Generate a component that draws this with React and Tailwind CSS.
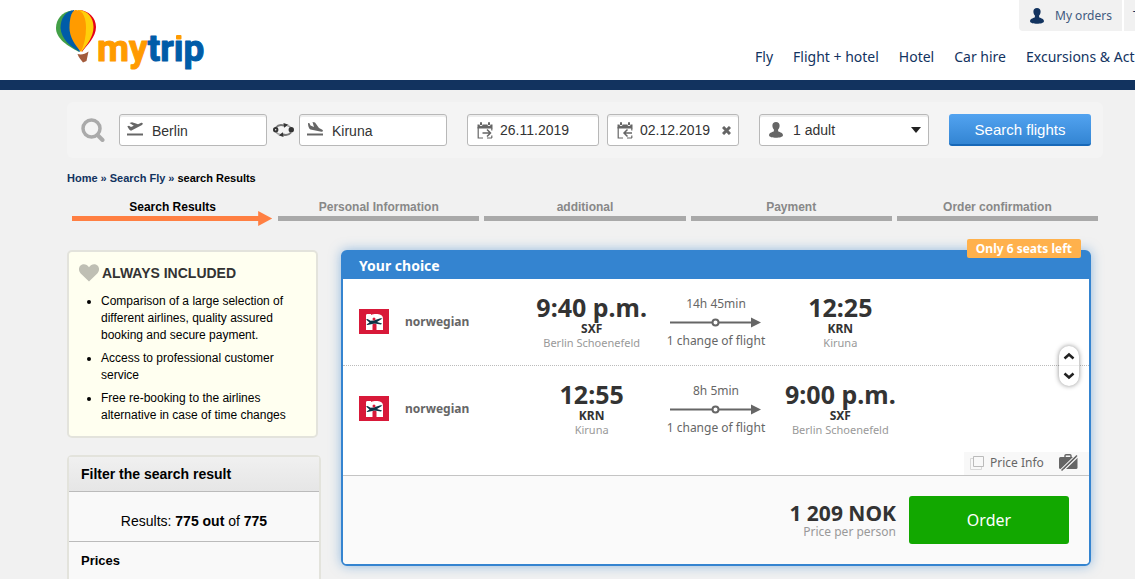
import React from "react";

const sans = "font-['Noto_Sans','Open_Sans',sans-serif]";

function Logo() {
  return (
    <svg viewBox="0 0 152 64" className="h-16 w-[152px]" role="img" aria-label="mytrip">
      <path d="M16 2.500C6 4 0 11 0 20c0 11 12 18 23 24z" fill="#43a047" />
      <path d="M18 2C9 3 4.500 11 4.500 20c1 11 9 18 19.500 24z" fill="#005ca8" />
      <path d="M22 2c11 0 18 8 18 17 0 10-9 18-14 25z" fill="#e50019" />
      <path d="M22 2c10 0 15.500 8 15.500 17 0 10-7 18-12 25z" fill="#ffcf0a" />
      <path d="M19 2c8-1 11 8 11 18 0 9-2 17-5 24-6-7-11.500-15-11.500-24 0-9 1.500-16 5.500-18z" fill="#ff9b00" />
      <path d="M21.500 46c4 1 7.500 0 11-2.500l-2 9.500-3.500 1.500c-1.500-2-4.500-5-5.500-8.500z" fill="#a35b3c" />
      <g fontFamily="Roboto, sans-serif" fontWeight="700" fontSize="37" strokeLinejoin="round" strokeWidth="1">
        <text x="41" y="53">
          <tspan fill="#ff9b00" stroke="#ff9b00">my</tspan>
          <tspan fill="#005ca8" stroke="#005ca8">trip</tspan>
        </text>
      </g>
      <path d="M117 22h11v9.500h-11z" fill="#fff" />
      <rect x="120" y="27" width="5.500" height="4.500" rx="1" fill="#ff9b00" />
    </svg>
  );
}

function Person({ className }) {
  return (
    <svg viewBox="0 0 14 16" className={className} fill="currentColor" aria-hidden="true">
      <path d="M7 0c2.300 0 3.600 1.300 3.600 3.400 0 1.700-.5 3-1.500 4v1.900c.8.800 4.300 1 4.900 3.700.2 2-3.500 2.800-7 2.800s-7.200-.8-7-2.800c.6-2.700 4.100-2.900 4.900-3.700V7.400c-1-1-1.500-2.300-1.500-4C3.400 1.300 4.700 0 7 0z" />
    </svg>
  );
}

function PlaneIcon({ landing }) {
  return (
    <svg viewBox="0 0 17 14" className="mb-0.5 h-3.5 w-[17px] shrink-0 text-[#666]" fill="currentColor" aria-hidden="true">
      <path d="M0 11.500h16v2H0z" />
      {landing ? (
        <path d="M1 1l1.500.3 1 2.200 3.500 1.400L5.500 0l2.500.5 4 5.600 3 1.300c1.500.8 1.300 2.500-.6 2.300L3.500 7.500C1.500 6.600 1 3.500 1 1z" />
      ) : (
        <path d="M.3 4.300l1.700-.5 2 1.200 2.800-1.200L2.500 1 5 .2l6 2 2.800-1.200c1.800-.6 2.800.9 1.200 2L4.500 8.600C3 9 1.300 6.500.3 4.300z" />
      )}
    </svg>
  );
}

function CalendarIcon({ back }) {
  return (
    <svg viewBox="0 0 16 17" className="h-[17px] w-4 shrink-0 text-[#666]" fill="none" stroke="currentColor" aria-hidden="true">
      <path d="M1.200 5v11H6M15 16h-5" strokeWidth="1.200" />
      <path d="M14.800 6v2.500M14.800 13.500v2.500" strokeWidth="1.200" />
      <path d="M.5 2.500H2.500a1.500 1.500 0 0 0 3 0h5a1.500 1.500 0 0 0 3 0h2V6.500H.5z" fill="currentColor" stroke="none" />
      <path d="M4 .3v2.600M12 .3v2.600" strokeWidth="2" />
      <path d={back ? "M15 11H7M10.500 7.500 7 11l3.500 3.500" : "M5.500 11h8M10 7.500l3.500 3.500-3.500 3.500"} strokeWidth="1.500" />
    </svg>
  );
}

function SwapIcon() {
  return (
    <svg viewBox="0 0 21 14" className="h-3.5 w-[21px]" fill="none" aria-hidden="true">
      <path d="M3 4.500C5 2 8 1.500 11 2.500M18 9.500c-2 2.500-5 3-8 2" stroke="#777" strokeWidth="2" />
      <path d="M10.500 0l5 1.800-4.500 3zM10.500 14l-5-1.800 4.500-3z" fill="#333" />
      <path d="M14 2.500c2 .4 3 1 4 2.500M7 11.500c-2-.4-3-1-4-2.500" stroke="#999" strokeWidth="1.500" />
      <circle cx="2.700" cy="6.800" r="1.700" stroke="#333" strokeWidth="2" />
      <circle cx="18.300" cy="6.800" r="2.700" fill="#333" />
    </svg>
  );
}

const field =
  "flex h-8 shrink-0 items-center rounded-[3px] border border-[#b8b8b8] bg-white text-sm text-[#333] shadow-[inset_0_2px_0_#eee]";

function SearchBar() {
  return (
    <form className="flex items-center rounded-md bg-[#f4f4f4] px-3 py-3" onSubmit={(e) => e.preventDefault()}>
      <svg viewBox="0 0 24 24" className="ml-0.5 mr-3.5 size-6 shrink-0" fill="none" stroke="#aaa" aria-hidden="true">
        <circle cx="10.500" cy="10.500" r="8.500" strokeWidth="3.500" />
        <path d="M16.500 17l5 5" strokeWidth="4" strokeLinecap="round" />
      </svg>
      <label className={`${field} w-[148px] pl-[7px]`}>
        <PlaneIcon />
        <input aria-label="From" defaultValue="Berlin" className="ml-2 w-full min-w-0 bg-transparent pt-0.5 outline-none" />
      </label>
      <button type="button" aria-label="Swap" className="mr-[5px] ml-1.5 shrink-0">
        <SwapIcon />
      </button>
      <label className={`${field} w-[148px] pl-[7px]`}>
        <PlaneIcon landing />
        <input aria-label="To" defaultValue="Kiruna" className="ml-2 w-full min-w-0 bg-transparent pt-0.5 outline-none" />
      </label>
      <label className={`${field} ml-5 w-[132px] pl-[9px]`}>
        <CalendarIcon />
        <input aria-label="Departure date" defaultValue="26.11.2019" className="ml-[7px] w-full min-w-0 bg-transparent outline-none" />
      </label>
      <div className={`${field} ml-2 w-[132px] pl-[9px] pr-[7px]`}>
        <CalendarIcon back />
        <input aria-label="Return date" defaultValue="02.12.2019" className="ml-[7px] w-full min-w-0 bg-transparent outline-none" />
        <button type="button" aria-label="Clear return date" className="shrink-0">
          <svg viewBox="0 0 9 9" className="size-[9px]" stroke="#666" strokeWidth="3" aria-hidden="true">
            <path d="M1 1l7 7M8 1L1 8" />
          </svg>
        </button>
      </div>
      <label className={`${field} relative ml-5 w-[170px] pl-[9px]`}>
        <Person className="h-4 w-3.5 shrink-0 text-[#666]" />
        <select aria-label="Passengers" className="ml-2.5 h-full w-full appearance-none bg-transparent outline-none">
          <option>1 adult</option>
          <option>2 adults</option>
        </select>
        <svg viewBox="0 0 10 6" className="pointer-events-none absolute right-[7px] h-1.5 w-2.5" fill="#222" aria-hidden="true">
          <path d="M0 0h10L5 6z" />
        </svg>
      </label>
      <button
        type="submit"
        className="ml-5 h-8 w-[142px] shrink-0 rounded-[3px] border-b-2 border-[#1768b8] bg-linear-to-b from-[#52a3f0] to-[#3385d3] pt-0.5 text-[15px] text-white"
      >
        Search flights
      </button>
    </form>
  );
}

function Step({ children, active }) {
  return (
    <li className={`text-center text-xs leading-4 font-bold ${active ? "text-black" : "text-[#888]"}`}>
      {children}
      {active ? (
        <svg viewBox="0 0 201 15" preserveAspectRatio="xMaxYMid slice" className="-mt-1 -mb-[5px] h-[15px] w-full" fill="#ff7f42" aria-hidden="true">
          <path d="M0 5h186V0l14 7.500L186 15v-5H0z" />
        </svg>
      ) : (
        <div className="mt-px h-[5px] bg-[#a9a9a9]" />
      )}
    </li>
  );
}

function AirlineLogo() {
  return (
    <svg viewBox="0 0 30 25" className="h-[25px] w-[30px] shrink-0" aria-hidden="true">
      <rect width="30" height="25" fill="#d81939" />
      <path d="M7 6.500c0-1 .5-1.500 1.500-1.500H12v1c3-1.500 12-2 12 3.500V21h-6.500v-5.500c0-1.500-4-1.500-4 0V21H7z" fill="#fff" />
      <path d="M7 10.500l1.500-.5 3 1.800 3-.3 7-2.300 2 .3-5.500 3.500 5 1.500-1 .9-6.500-.9-7 1.500-1-.6 3-1.800z" fill="#0b3446" />
      <circle cx="15" cy="10" r="1.500" fill="#d81939" />
    </svg>
  );
}

function Airport({ time, code, city }) {
  return (
    <div className="col-span-2 flex flex-col items-center whitespace-nowrap">
      <span className="text-[25px] leading-7 font-bold text-[#333]">{time}</span>
      <span className="mt-px text-xs leading-3.5 font-bold text-[#333]">{code}</span>
      <span className="text-[11px] leading-3.5 text-[#999]">{city}</span>
    </div>
  );
}

function Leg({ from, to, duration, className }) {
  return (
    <div className={`grid grid-cols-12 items-start pt-3.5 ${className}`}>
      <div className="col-span-3 flex items-center gap-4 pt-4 pl-4 text-xs font-bold text-[#666]">
        <AirlineLogo />
        norwegian
      </div>
      <Airport {...from} />
      <div className="col-span-2 flex flex-col items-center pt-[3px] text-xs leading-4 whitespace-nowrap text-[#666]">
        <span>{duration}</span>
        <svg viewBox="0 0 91 11" className="my-[5px] h-[11px] w-[91px]" fill="none" stroke="#666" strokeWidth="2" aria-hidden="true">
          <path d="M0 5.500h42M49 5.500h34" />
          <circle cx="45.500" cy="5.500" r="3" />
          <path d="M81 .5v10l10-5z" fill="#666" stroke="none" />
        </svg>
        <span>1 change of flight</span>
      </div>
      <Airport {...to} />
    </div>
  );
}

function Chevron({ down }) {
  return (
    <svg viewBox="0 0 12 8" className="h-2 w-3" fill="none" stroke="#222" strokeWidth="2.500" aria-hidden="true">
      <path d={down ? "M1.500 1.500L6 5.500l4.500-4" : "M1.500 6.500L6 2.500l4.500 4"} />
    </svg>
  );
}

function Offer() {
  return (
    <section className={`relative self-start rounded-md border-2 border-[#3484d0] bg-white shadow-[0_0_12px_rgba(52,132,208,0.5)] ${sans}`}>
      <span className="absolute -top-[13px] right-2 rounded-xs bg-[#ffb14c] px-[9px] text-xs leading-[19px] font-bold text-white">
        Only 6 seats left
      </span>
      <h2 className="h-[27px] bg-[#3484d0] px-4 text-sm leading-[27px] font-bold text-white">Your choice</h2>
      <div className="relative">
        <Leg
          className="h-[87px] border-b border-dotted border-[#bbb]"
          from={{ time: "9:40 p.m.", code: "SXF", city: "Berlin Schoenefeld" }}
          to={{ time: "12:25", code: "KRN", city: "Kiruna" }}
          duration="14h 45min"
        />
        <Leg
          className="h-[86px]"
          from={{ time: "12:55", code: "KRN", city: "Kiruna" }}
          to={{ time: "9:00 p.m.", code: "SXF", city: "Berlin Schoenefeld" }}
          duration="8h 5min"
        />
        <div className="absolute top-[67px] right-2.5 flex w-5 flex-col overflow-hidden rounded-full bg-white shadow-[0_0_5px_rgba(0,0,0,0.45)]">
          <button type="button" aria-label="Previous" className="flex h-5 items-center justify-center border-b border-[#eee]">
            <Chevron />
          </button>
          <button type="button" aria-label="Next" className="flex h-5 items-center justify-center">
            <Chevron down />
          </button>
        </div>
      </div>
      <div className="flex justify-end border-b border-[#c4c4c4]">
        <div className="flex h-[23px] w-[125px] items-center bg-[#f8f8f8] pb-0.5 pl-1.5 text-xs text-[#666]">
          <svg viewBox="0 0 14 14" className="mr-1.5 size-3.5" fill="none" stroke="#bbb" aria-hidden="true">
            <path d="M3.500.5h10v10h-10z" />
            <path d="M3 2.500H.500v11h11V11" stroke="#d8d8d8" />
          </svg>
          <a href="#price-info">Price Info</a>
          <svg viewBox="0 0 19 17" className="mr-[11px] ml-auto h-[17px] w-[19px]" aria-hidden="true">
            <path d="M6 3V1.700C6 1 6.500.7 7 .7h4c.7 0 1 .3 1 1V3" fill="none" stroke="#666" strokeWidth="1.400" />
            <rect y="3" width="18.500" height="12" rx="1.500" fill="#666" />
            <path d="M1 16.500L17.500.5M4 17L19 2.500" stroke="#f8f8f8" strokeWidth="1.300" />
            <path d="M2.500 16.500L18 1.500" stroke="#666" strokeWidth="1.500" />
          </svg>
        </div>
      </div>
      <div className="flex h-[88px] items-center justify-end gap-[13px] rounded-b bg-[#fafafa] pr-5">
        <div className="text-right">
          <div className="text-[21px] leading-6 font-bold text-[#333]">1 209 NOK</div>
          <div className="text-xs leading-3.5 text-[#999]">Price per person</div>
        </div>
        <button type="button" className="h-12 w-40 rounded-[3px] bg-[#12a800] text-base text-white">
          Order
        </button>
      </div>
    </section>
  );
}

function Sidebar() {
  return (
    <aside className="flex w-[254px] shrink-0 flex-col">
      <section className="mr-[3px] rounded-[5px] border-2 border-[#e3e3dc] bg-[#fffff0] px-2.5 pt-[11px] pb-3">
        <h2 className="flex items-center gap-[3px] text-sm leading-5 font-bold text-[#333]">
          <svg viewBox="0 0 20 18" className="h-[18px] w-5" fill="#bfbfb4" aria-hidden="true">
            <path d="M10 17.500L1.700 9.500C-.7 7 -.5 3.500 1.500 1.600 4-.7 8 0 10 3.200 12 0 16-.7 18.500 1.600c2 1.900 2.200 5.400-.2 7.900z" />
          </svg>
          ALWAYS INCLUDED
        </h2>
        <ul className="mt-2.5 flex list-disc flex-col gap-1.5 pr-4 pl-[22px] text-xs leading-[17px] text-black">
          <li>Comparison of a large selection of different airlines, quality assured booking and secure payment.</li>
          <li>Access to professional customer service</li>
          <li>Free re-booking to the airlines alternative in case of time changes</li>
        </ul>
      </section>
      <section className="mt-[17px] flex-1 rounded-t-[5px] border-2 border-b-0 border-[#e3e3dc] bg-[#f9f9f9] text-black">
        <h2 className="border-b border-[#bbb] bg-linear-to-b from-[#f0f0f0] to-[#e6e6e6] px-3 text-sm leading-[34px] font-bold">
          Filter the search result
        </h2>
        <p className="border-b border-[#bbb] pt-[19px] pb-2.5 text-center text-sm leading-5">
          Results: <b>775 out</b> of <b>775</b>
        </p>
        <h3 className="px-3 pt-[9px] text-[13px] leading-5 font-bold">Prices</h3>
      </section>
    </aside>
  );
}

export default function App() {
  return (
    <div className="flex min-h-screen flex-col overflow-x-hidden bg-[#f1f1f1] font-['Liberation_Sans',Arial,sans-serif]">
      <header className={`flex h-[90px] justify-between overflow-hidden border-b-10 border-[#12335f] bg-white pl-14 ${sans}`}>
        <a href="#home" className="mt-2">
          <Logo />
        </a>
        <div className="w-[380px] shrink-0 whitespace-nowrap text-[#12335f]">
          <div className="ml-auto flex w-[116px] gap-0.5 text-xs">
            <a href="#orders" className="flex h-[31px] w-[103px] shrink-0 items-center gap-[11px] rounded-bl bg-[#f1f1f1] pl-[11px] text-[#3f5a80]">
              <Person className="h-4 w-3.5 text-[#12335f]" />
              My orders
            </a>
            <a href="#travel" className="h-[31px] bg-[#f1f1f1] px-[9px] leading-[31px]">
              Travel info
            </a>
          </div>
          <nav className="mt-4 flex gap-5 text-sm leading-5">
            <a href="#fly">Fly</a>
            <a href="#flight-hotel">Flight + hotel</a>
            <a href="#hotel">Hotel</a>
            <a href="#car">Car hire</a>
            <a href="#excursions">Excursions &amp; Activities</a>
          </nav>
        </div>
      </header>
      <main className="flex flex-1 flex-col pt-3 pr-8 pl-[67px]">
        <SearchBar />
        <nav aria-label="Breadcrumb" className="mt-3 flex gap-[3px] text-[11px] leading-4 font-bold text-[#12335f]">
          <a href="#home">Home</a>
          <span>»</span>
          <a href="#fly">Search Fly</a>
          <span>»</span>
          <span className="text-black">search Results</span>
        </nav>
        <ol className="mt-[13px] grid grid-cols-5 gap-[5px] px-[5px]">
          <Step active>Search Results</Step>
          <Step>Personal Information</Step>
          <Step>additional</Step>
          <Step>Payment</Step>
          <Step>Order confirmation</Step>
        </ol>
        <div className="mt-[29px] flex flex-1 gap-5 pr-3">
          <Sidebar />
          <div className="min-w-0 flex-1">
            <Offer />
          </div>
        </div>
      </main>
    </div>
  );
}
